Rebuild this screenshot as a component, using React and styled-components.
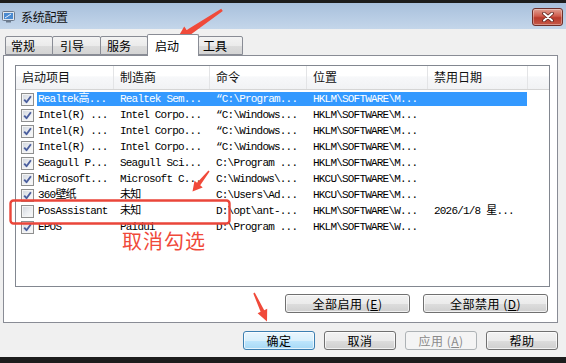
import React from "react";
import styled, { createGlobalStyle } from "styled-components";

const Global = createGlobalStyle`
  html, body { margin: 0; padding: 0; background: #f0f0f0; }
  body { font-family: "Noto Sans CJK SC", "Liberation Sans", sans-serif; }
  * { box-sizing: border-box; }
`;

const Screen = styled.div`
  position: relative;
  width: 566px;
  height: 363px;
  display: flex;
  flex-direction: column;
  overflow: hidden;
  background: #f0f0f0;
`;

const DarkStrip = styled.div`
  height: ${(p) => p.$h}px;
  flex: none;
  background: #1c1c1c;
  margin-top: ${(p) => (p.$bottom ? "auto" : "0")};
`;

const TitleBar = styled.div`
  height: 26px;
  flex: none;
  display: flex;
  align-items: center;
  padding: 0 3px 0 2px;
  background: linear-gradient(#a8c0dc, #c4d6ea);
`;

const TitleText = styled.span`
  margin-left: 6px;
  font-size: 12px;
  color: #111;
  letter-spacing: -0.3px;
`;

const CloseBtn = styled.div`
  margin-left: auto;
  width: 31px;
  height: 18px;
  margin-top: 2px;
  border: 1px solid #6e2f2a;
  border-radius: 3px;
  background: linear-gradient(#e0a093 0%, #cf5b4c 45%, #b83a2c 55%, #c65a48 100%);
  display: flex;
  align-items: center;
  justify-content: center;
  box-shadow: inset 0 0 0 1px rgba(255, 255, 255, 0.35);
`;

const Body = styled.div`
  flex: 1;
  display: flex;
  flex-direction: column;
  padding: 5px 8px 0 3px;
`;

const TabStrip = styled.div`
  height: 21px;
  display: flex;
  align-items: flex-end;
  padding-left: 2px;
  position: relative;
  z-index: 1;
`;

const Tab = styled.div`
  width: ${(p) => p.$w}px;
  height: ${(p) => (p.$active ? 22 : 19)}px;
  margin-bottom: ${(p) => (p.$active ? -1 : 0)}px;
  margin-left: -1px;
  &:first-child { margin-left: 0; }
  border: 1px solid #898c95;
  border-bottom: ${(p) => (p.$active ? "none" : "1px solid #898c95")};
  border-radius: 2px 2px 0 0;
  background: ${(p) =>
    p.$active ? "#ffffff" : "linear-gradient(#f3f3f3, #ebebeb 50%, #dcdcdc 51%, #d4d4d4)"};
  font-size: 12px;
  line-height: 1;
  color: #000;
  display: flex;
  align-items: center;
  padding-left: ${(p) => p.$pad}px;
  padding-top: ${(p) => (p.$active ? 0 : 1)}px;
  position: relative;
  z-index: ${(p) => (p.$active ? 2 : 0)};
`;

const Panel = styled.div`
  height: 268px;
  border: 1px solid #898c95;
  background: #ffffff;
  padding: 9px 7px 0 11px;
  display: flex;
  flex-direction: column;
`;

const ListView = styled.div`
  height: 222px;
  border: 1px solid #828790;
  background: #fff;
  display: flex;
  flex-direction: column;
  overflow: hidden;
`;

const HeaderRow = styled.div`
  height: 24px;
  flex: none;
  display: grid;
  grid-template-columns: 98px 96px 97px 121px 100px 1fr;
  border-bottom: 1px solid #d5d5d5;
  background: linear-gradient(#ffffff, #ffffff 45%, #f7f8fa 46%, #f1f2f4);
`;

const HeaderCell = styled.div`
  border-right: 1px solid #e3e4e6;
  font-size: 12px;
  line-height: 1;
  color: #111;
  display: flex;
  align-items: center;
  padding-left: 6px;
  padding-bottom: 1px;
  &:last-child { border-right: none; }
`;

const Rows = styled.div`
  padding-top: 1px;
  display: flex;
  flex-direction: column;
`;

const Row = styled.div`
  height: 16px;
  display: flex;
  align-items: center;
`;

const CheckCell = styled.div`
  width: 21px;
  flex: none;
  padding-left: 5px;
  display: flex;
  align-items: center;
`;

const CheckBox = styled.span`
  width: 13px;
  height: 13px;
  border: 1px solid #8e8f8f;
  background: linear-gradient(135deg, #cfd4dc, #eef0f3 60%, #fafafa);
  display: flex;
  align-items: center;
  justify-content: center;
  box-shadow: inset 0 0 0 1px #f4f4f4;
`;

const Selectable = styled.div`
  height: 14px;
  display: grid;
  grid-template-columns: 77px 96px 97px 121px 99px;
  align-items: center;
  background: ${(p) => (p.$selected ? "#3399ff" : "transparent")};
  color: ${(p) => (p.$selected ? "#ffffff" : "#000000")};
`;

const Cell = styled.div`
  font-family: "Liberation Mono", "Noto Sans CJK SC", monospace;
  font-size: 11px;
  letter-spacing: -0.8px;
  line-height: 14px;
  white-space: nowrap;
  overflow: hidden;
  padding-left: ${(p) => p.$pad ?? 6}px;
`;

const PanelButtons = styled.div`
  margin-top: 7px;
  display: flex;
  justify-content: flex-end;
  gap: 13px;
  padding-right: 2px;
`;

const Button = styled.div`
  width: ${(p) => p.$w}px;
  height: 19px;
  border: 1px solid ${(p) => (p.$default ? "#3c7fb1" : p.$disabled ? "#adb2b5" : "#707070")};
  border-radius: 3px;
  background: ${(p) =>
    p.$disabled
      ? "#f4f4f4"
      : p.$default
      ? "linear-gradient(#eaf6fd, #d9f0fc 50%, #bee6fd 51%, #a7d9f5)"
      : "linear-gradient(#f2f2f2, #ebebeb 50%, #dddddd 51%, #cfcfcf)"};
  box-shadow: ${(p) => (p.$disabled ? "none" : "inset 0 0 0 1px rgba(255,255,255,0.7)")};
  font-size: 12px;
  line-height: 1;
  color: ${(p) => (p.$disabled ? "#8a8a8a" : "#000")};
  display: flex;
  align-items: center;
  justify-content: center;
  letter-spacing: 0.5px;
`;

const Underlined = styled.span`
  text-decoration: underline;
`;

const DialogButtons = styled.div`
  margin-top: 8px;
  height: 19px;
  display: flex;
  justify-content: flex-end;
  gap: 9px;
`;

const Overlay = styled.svg`
  position: absolute;
  left: 0;
  top: 0;
  pointer-events: none;
`;

const Annotation = styled.div`
  position: absolute;
  left: 122px;
  top: 231px;
  font-family: "Noto Sans CJK SC", sans-serif;
  font-size: 20px;
  line-height: 1;
  color: #f0493a;
  letter-spacing: 1px;
`;

const rows = [
  { on: true, sel: true, c: ["Realtek高...", "Realtek Sem...", "“C:\\Program...", "HKLM\\SOFTWARE\\M...", ""] },
  { on: true, c: ["Intel(R) ...", "Intel Corpo...", "“C:\\Windows...", "HKLM\\SOFTWARE\\M...", ""] },
  { on: true, c: ["Intel(R) ...", "Intel Corpo...", "“C:\\Windows...", "HKLM\\SOFTWARE\\M...", ""] },
  { on: true, c: ["Intel(R) ...", "Intel Corpo...", "“C:\\Windows...", "HKLM\\SOFTWARE\\M...", ""] },
  { on: true, c: ["Seagull P...", "Seagull Sci...", "C:\\Program ...", "HKLM\\SOFTWARE\\M...", ""] },
  { on: true, c: ["Microsoft...", "Microsoft C...", "C:\\Windows\\...", "HKCU\\SOFTWARE\\M...", ""] },
  { on: true, c: ["360壁纸", "未知", "C:\\Users\\Ad...", "HKCU\\SOFTWARE\\M...", ""] },
  { on: false, c: ["PosAssistant", "未知", "D:\\opt\\ant-...", "HKLM\\SOFTWARE\\W...", "2026/1/8 星..."] },
  { on: true, c: ["EPOS", "Paidui", "D:\\Program ...", "HKLM\\SOFTWARE\\W...", ""] },
];

const headers = ["启动项目", "制造商", "命令", "位置", "禁用日期", ""];

const tabs = [
  { t: "常规", w: 48, pad: 5 },
  { t: "引导", w: 49, pad: 7 },
  { t: "服务", w: 48, pad: 6 },
  { t: "启动", w: 52, pad: 7, active: true },
  { t: "工具", w: 45, pad: 4 },
];

function CheckMark() {
  return (
    <svg width="9" height="9" viewBox="0 0 9 9">
      <path d="M1.2 4.6 L3.5 7.2 L7.9 1.2" fill="none" stroke="#4b5f9e" strokeWidth="1.9" strokeLinejoin="round" />
    </svg>
  );
}

function AppIcon() {
  return (
    <svg width="13" height="13" viewBox="0 0 13 13">
      <rect x="0.5" y="1.5" width="12" height="9" rx="1" fill="#dfe6ee" stroke="#6c7a8c" />
      <rect x="2" y="3" width="9" height="6" fill="#4a8ad0" />
      <path d="M3 8 L9 4" stroke="#e8f2ff" strokeWidth="1" />
      <rect x="4" y="11" width="5" height="1.5" fill="#6c7a8c" />
    </svg>
  );
}

export default function App() {
  return (
    <>
      <Global />
      <Screen>
        <DarkStrip $h={3} />
        <TitleBar>
          <AppIcon />
          <TitleText>系统配置</TitleText>
          <CloseBtn>
            <svg width="14" height="10" viewBox="0 0 14 10">
              <path d="M3 1.5 L11 8.5 M11 1.5 L3 8.5" stroke="#5a2520" strokeWidth="3.6" strokeLinecap="round" />
              <path d="M3 1.5 L11 8.5 M11 1.5 L3 8.5" stroke="#ffffff" strokeWidth="2" strokeLinecap="round" />
            </svg>
          </CloseBtn>
        </TitleBar>
        <Body>
          <TabStrip>
            {tabs.map((t) => (
              <Tab key={t.t} $w={t.w} $pad={t.pad} $active={t.active}>
                {t.t}
              </Tab>
            ))}
          </TabStrip>
          <Panel>
            <ListView>
              <HeaderRow>
                {headers.map((h, i) => (
                  <HeaderCell key={i}>{h}</HeaderCell>
                ))}
              </HeaderRow>
              <Rows>
                {rows.map((r, i) => (
                  <Row key={i}>
                    <CheckCell>
                      <CheckBox>{r.on && <CheckMark />}</CheckBox>
                    </CheckCell>
                    <Selectable $selected={r.sel}>
                      {r.c.map((c, j) => (
                        <Cell key={j} $pad={j === 0 ? 1 : 6}>
                          {c}
                        </Cell>
                      ))}
                    </Selectable>
                  </Row>
                ))}
              </Rows>
            </ListView>
            <PanelButtons>
              <Button $w={125}>
                全部启用 (<Underlined>E</Underlined>)
              </Button>
              <Button $w={125}>
                全部禁用 (<Underlined>D</Underlined>)
              </Button>
            </PanelButtons>
          </Panel>
          <DialogButtons>
            <Button $w={72} $default>
              确定
            </Button>
            <Button $w={72}>取消</Button>
            <Button $w={72} $disabled>
              应用 (<Underlined>A</Underlined>)
            </Button>
            <Button $w={72}>帮助</Button>
          </DialogButtons>
        </Body>
        <DarkStrip $h={6} $bottom />
        <Overlay width="566" height="363" viewBox="0 0 566 363">
          <polygon
            points="222.8,11 190.1,35.1 192.6,38.8 175.5,41.5 184.2,26.4 186.7,30.1 221.2,8.8"
            fill="#f04a3a"
          />
          <polygon
            points="209.6,171.5 200.2,185.3 202.7,187.4 192.5,191.5 194.5,180.7 197,182.8 208.4,170.5"
            fill="#f04a3a"
          />
          <polygon
            points="253.3,293.4 260.6,311.8 257.6,313.3 267,321.5 267.2,308.7 264.2,310.2 254.7,292.6"
            fill="#f04a3a"
          />
          <rect x="10.5" y="200.5" width="219" height="23" rx="3" fill="none" stroke="#ea463a" strokeWidth="2.4" />
        </Overlay>
        <Annotation>取消勾选</Annotation>
      </Screen>
    </>
  );
}
